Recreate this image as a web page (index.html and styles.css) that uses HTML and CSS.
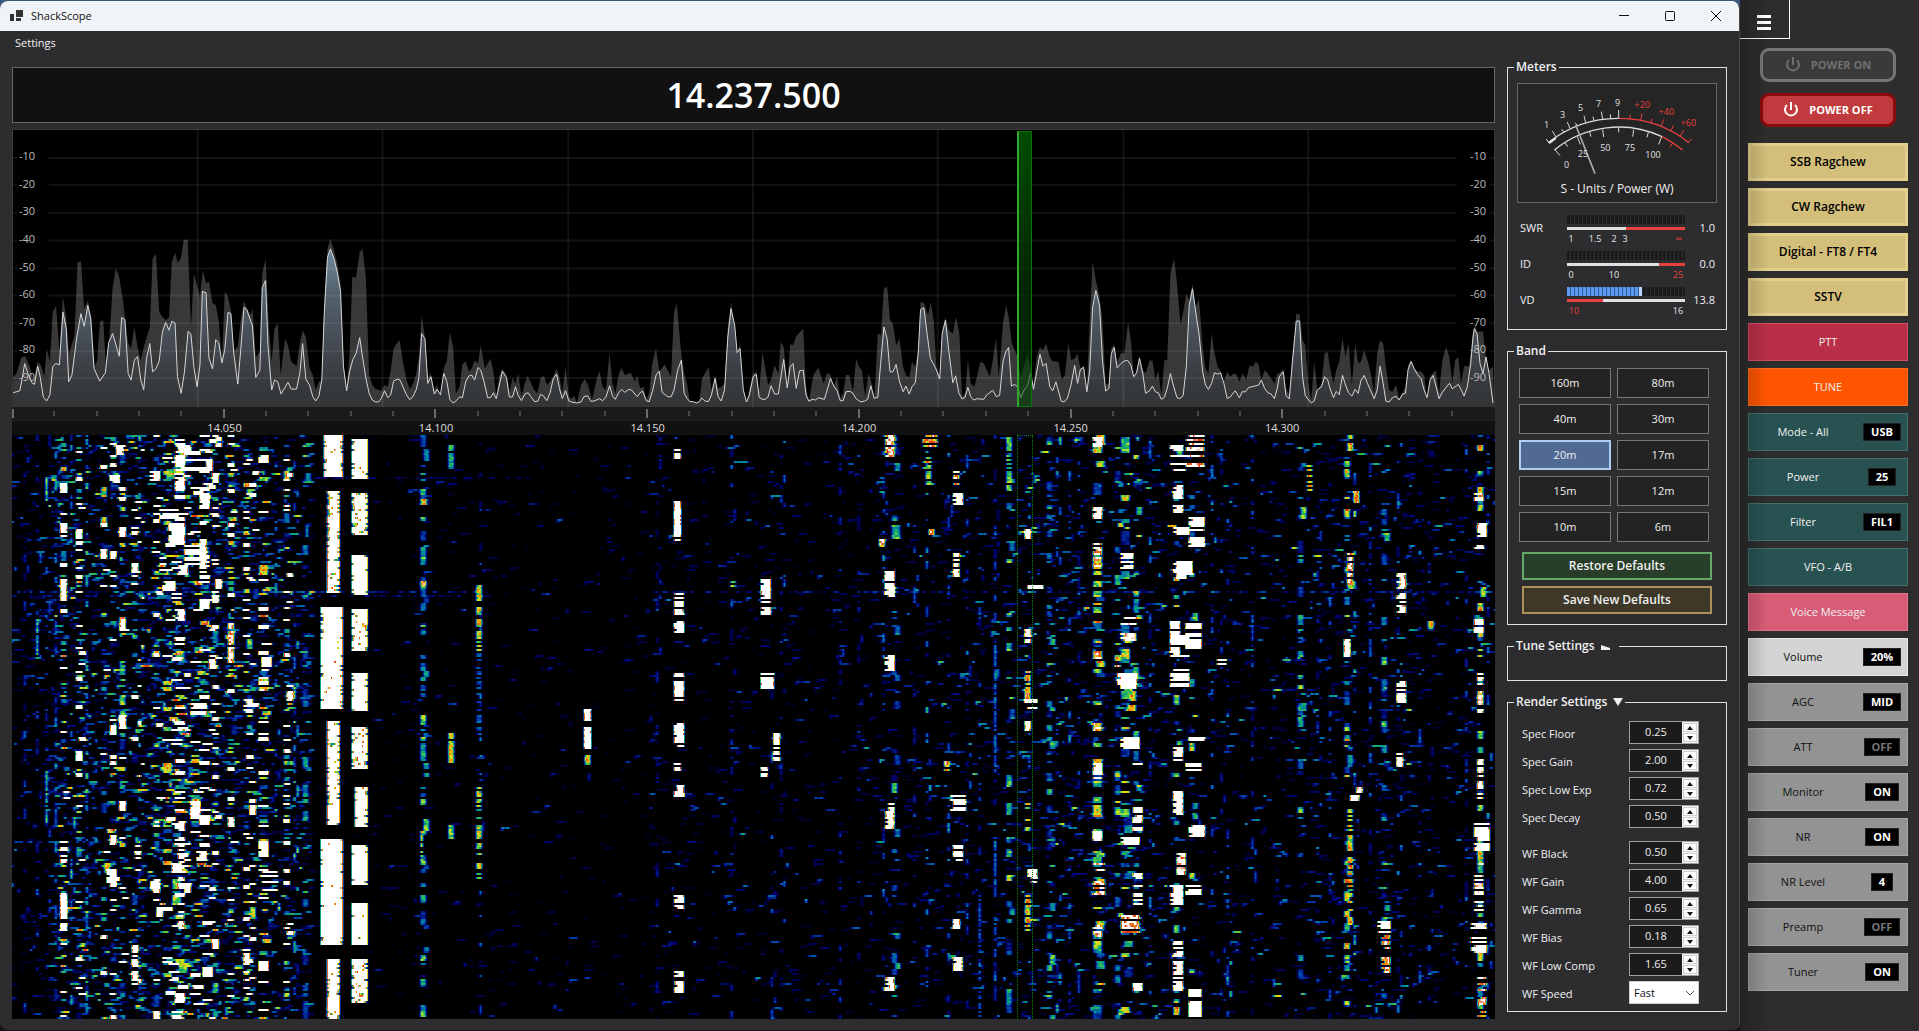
FILE: index.html
```html
<!DOCTYPE html>
<html lang="en">
<head>
<meta charset="utf-8">
<title>ShackScope</title>
<link rel="stylesheet" href="styles.css">
</head>
<body>
<div class="desktop">
  <div class="window">
    <header class="titlebar">
      <svg class="app-icon" width="13" height="12" viewBox="0 0 13 12" fill="#333"><path d="M0 4h4v7H0zM6 0h7v7H6zM6 8h5v3H6z"/></svg>
      <span class="app-name">ShackScope</span>
      <div class="caption-buttons">
        <button class="caption" aria-label="Minimize"><svg width="12" height="12" viewBox="0 0 12 12" stroke="#111" fill="none"><path d="M1 5.500h10"/></svg></button>
        <button class="caption" aria-label="Maximize"><svg width="12" height="12" viewBox="0 0 12 12" stroke="#111" fill="none"><rect x="1.500" y="1.500" width="9" height="9" rx="1"/></svg></button>
        <button class="caption" aria-label="Close"><svg width="12" height="12" viewBox="0 0 12 12" stroke="#111" fill="none"><path d="M1 1l10 10M11 1L1 11"/></svg></button>
      </div>
    </header>
    <nav class="menubar"><button class="menu-item">Settings</button></nav>
    <div class="workspace">
      <main class="scope">
        <output class="frequency">14.237.500</output>
        <section class="spectrum" aria-label="Spectrum">
          <svg class="plot" viewBox="0 0 1483 278" preserveAspectRatio="none">
            <defs>
              <linearGradient id="trace-fill" gradientUnits="userSpaceOnUse" x1="0" y1="115" x2="0" y2="278">
                <stop offset="0" stop-color="#7590a5"/><stop offset="0.300" stop-color="#53616c"/><stop offset="0.600" stop-color="#454b54"/><stop offset="0.800" stop-color="#3a3d40"/><stop offset="1" stop-color="#323436"/>
              </linearGradient>
            </defs>
            <polygon id="peaks" fill="#383838"/>
            <polygon id="trace-area" fill="url(#trace-fill)"/>
            <path class="grid" d="M185 0V278M370 0V278M556 0V278M741 0V278M926 0V278M1112 0V278M1297 0V278"/>
            <path class="grid" d="M36 28H1446M36 55H1446M36 83H1446M36 111H1446M36 139H1446M36 166H1446M36 194H1446M36 222H1446M36 249H1446"/>
            <path class="grid" d="M0 28h4M0 55h4M0 83h4M0 111h4M0 139h4M0 166h4M0 194h4M0 222h4M0 249h4M1478 28h5M1478 55h5M1478 83h5M1478 111h5M1478 139h5M1478 166h5M1478 194h5M1478 222h5M1478 249h5"/>
            <polyline id="trace" fill="none" stroke="#d6d6d6" vector-effect="non-scaling-stroke"/>
          </svg>
          <div class="db-scale db-left"><span>-10</span><span>-20</span><span>-30</span><span>-40</span><span>-50</span><span>-60</span><span>-70</span><span>-80</span><span>-90</span></div>
          <div class="db-scale db-right"><span>-10</span><span>-20</span><span>-30</span><span>-40</span><span>-50</span><span>-60</span><span>-70</span><span>-80</span><span>-90</span></div>
          <div class="passband"></div>
        </section>
        <div class="ruler">
          <svg class="ticks" viewBox="0 0 1483 13" preserveAspectRatio="none">
            <path stroke="#777" d="M42 4v5M85 4v5M127 4v5M169 4v5M254 4v5M296 4v5M339 4v5M381 4v5M466 4v5M508 4v5M550 4v5M593 4v5M677 4v5M720 4v5M762 4v5M804 4v5M889 4v5M931 4v5M974 4v5M1016 4v5M1101 4v5M1143 4v5M1186 4v5M1228 4v5M1313 4v5M1355 4v5M1397 4v5M1440 4v5"/>
            <path stroke="#bbb" d="M1 2v9M212 2v9M423 2v9M635 2v9M847 2v9M1059 2v9M1270 2v9"/>
          </svg>
          <div class="ruler-labels"><span>14.050</span><span>14.100</span><span>14.150</span><span>14.200</span><span>14.250</span><span>14.300</span></div>
        </div>
        <div class="waterfall">
          <canvas id="waterfall" width="1483" height="584"></canvas>
          <div class="passband-track"></div>
        </div>
      </main>

      <aside class="panels">
        <fieldset>
          <legend>Meters</legend>
          <div class="meters">
            <figure class="dial">
              <svg viewBox="84 252 594 270" fill="none" stroke-width="4">
                <path stroke="#d8d8d8" d="M175 428A334 334 0 0 1 386 355"/>
                <path stroke="#e8403c" d="M386 355A334 334 0 0 1 597 428"/>
                <path stroke="#e4e4e4" stroke-width="7" d="M177 429L197 414"/>
                <path stroke="#d8d8d8" d="M193 450A306 306 0 0 1 516 410"/>
                <path stroke="#e8403c" d="M516 410Q550 427 578 450"/>
                <path stroke="#d8d8d8" stroke-width="3" d="M176 428L169 417M198 411L187 393M222 398L215 387M240 386L232 366M262 378L256 368M287 370L282 347M312 362L309 350M338 358L334 335M362 356L361 343M386 356V330"/>
                <path stroke="#e8403c" stroke-width="3" d="M419 358L421 344M452 362L456 340M482 369L487 356M513 380L521 358M543 393L550 377M570 409L582 390M594 428L605 416M547 430L540 441"/>
                <path stroke="#d8d8d8" stroke-width="3" d="M194 448L210 467M226 429L233 440M262 410L271 433M299 396L303 410M338 388L341 411M386 384V397M431 389L428 410M475 397L471 412M515 410L506 433"/>
                <path stroke="#a9a9a9" stroke-width="5" d="M257 375L315 521"/>
                <g class="dial-text">
                  <text x="170" y="383">1</text><text x="218" y="353">3</text><text x="272" y="332">5</text><text x="326" y="320">7</text><text x="383" y="317">9</text>
                  <text class="hot" x="457" y="323">+20</text><text class="hot" x="529" y="344">+40</text><text class="hot" x="595" y="378">+60</text>
                  <text x="230" y="503">0</text><text x="279" y="470">25</text><text x="346" y="452">50</text><text x="420" y="452">75</text><text x="489" y="473">100</text>
                </g>
              </svg>
              <figcaption>S - Units / Power (W)</figcaption>
            </figure>
            <div class="meter-row">
              <span class="meter-name">SWR</span>
              <svg class="meter-bar" viewBox="0 0 118 33">
                <defs><pattern id="cells" width="4" height="9" patternUnits="userSpaceOnUse"><rect width="3" height="9" fill="#1b1b1b"/></pattern>
                <pattern id="lit" width="4" height="9" patternUnits="userSpaceOnUse"><rect width="4" height="9" fill="#36578a"/><rect width="3" height="9" fill="#5b9bf5"/></pattern></defs>
                <rect width="118" height="9" fill="url(#cells)"/><rect y="12" width="59" height="3" fill="#e0e0e0"/><rect x="59" y="12" width="59" height="3" fill="#e8403c"/>
                <text x="4" y="27">1</text><text x="28" y="27">1.5</text><text x="47" y="27">2</text><text x="58" y="27">3</text><text class="hot" x="112" y="27">∞</text>
              </svg>
              <span class="meter-value">1.0</span>
            </div>
            <div class="meter-row">
              <span class="meter-name">ID</span>
              <svg class="meter-bar" viewBox="0 0 118 33">
                <rect width="118" height="9" fill="url(#cells)"/><rect y="12" width="92" height="3" fill="#e0e0e0"/><rect x="92" y="12" width="26" height="3" fill="#e8403c"/>
                <text x="4" y="27">0</text><text x="47" y="27">10</text><text class="hot" x="111" y="27">25</text>
              </svg>
              <span class="meter-value">0.0</span>
            </div>
            <div class="meter-row">
              <span class="meter-name">VD</span>
              <svg class="meter-bar" viewBox="0 0 118 33">
                <rect width="118" height="9" fill="url(#cells)"/><rect width="72" height="9" fill="url(#lit)"/><rect x="72" width="3" height="9" fill="#b4d6fb"/><rect y="12" width="36" height="3" fill="#e8403c"/><rect x="36" y="12" width="82" height="3" fill="#e0e0e0"/>
                <text class="hot" x="7" y="27">10</text><text x="111" y="27">16</text>
              </svg>
              <span class="meter-value">13.8</span>
            </div>
          </div>
        </fieldset>

        <fieldset>
          <legend>Band</legend>
          <div class="bands">
            <div class="band-grid">
              <button>160m</button><button>80m</button><button>40m</button><button>30m</button><button class="selected">20m</button><button>17m</button><button>15m</button><button>12m</button><button>10m</button><button>6m</button>
            </div>
            <button class="defaults restore">Restore Defaults</button>
            <button class="defaults save">Save New Defaults</button>
          </div>
        </fieldset>

        <fieldset>
          <legend><button class="fold">Tune Settings <svg width="16" height="16" viewBox="0 0 16 16" fill="#eee"><path d="M0 7l9 3v2H0z"/></svg></button></legend>
          <div class="tune"></div>
        </fieldset>

        <fieldset>
          <legend><button class="fold">Render Settings <svg width="10" height="16" viewBox="0 0 10 16" fill="#eee"><path d="M0 4h10L5 12z"/></svg></button></legend>
          <div class="render">
            <div class="setting"><label for="s1">Spec Floor</label><span class="spin"><input id="s1" type="number" step="0.01" value="0.25"><span class="arrows"><button class="up" aria-label="Increase"></button><button class="down" aria-label="Decrease"></button></span></span></div>
            <div class="setting"><label for="s2">Spec Gain</label><span class="spin"><input id="s2" type="number" step="0.01" value="2.00"><span class="arrows"><button class="up" aria-label="Increase"></button><button class="down" aria-label="Decrease"></button></span></span></div>
            <div class="setting"><label for="s3">Spec Low Exp</label><span class="spin"><input id="s3" type="number" step="0.01" value="0.72"><span class="arrows"><button class="up" aria-label="Increase"></button><button class="down" aria-label="Decrease"></button></span></span></div>
            <div class="setting group-end"><label for="s4">Spec Decay</label><span class="spin"><input id="s4" type="number" step="0.01" value="0.50"><span class="arrows"><button class="up" aria-label="Increase"></button><button class="down" aria-label="Decrease"></button></span></span></div>
            <div class="setting"><label for="s5">WF Black</label><span class="spin"><input id="s5" type="number" step="0.01" value="0.50"><span class="arrows"><button class="up" aria-label="Increase"></button><button class="down" aria-label="Decrease"></button></span></span></div>
            <div class="setting"><label for="s6">WF Gain</label><span class="spin"><input id="s6" type="number" step="0.01" value="4.00"><span class="arrows"><button class="up" aria-label="Increase"></button><button class="down" aria-label="Decrease"></button></span></span></div>
            <div class="setting"><label for="s7">WF Gamma</label><span class="spin"><input id="s7" type="number" step="0.01" value="0.65"><span class="arrows"><button class="up" aria-label="Increase"></button><button class="down" aria-label="Decrease"></button></span></span></div>
            <div class="setting"><label for="s8">WF Bias</label><span class="spin"><input id="s8" type="number" step="0.01" value="0.18"><span class="arrows"><button class="up" aria-label="Increase"></button><button class="down" aria-label="Decrease"></button></span></span></div>
            <div class="setting"><label for="s9">WF Low Comp</label><span class="spin"><input id="s9" type="number" step="0.01" value="1.65"><span class="arrows"><button class="up" aria-label="Increase"></button><button class="down" aria-label="Decrease"></button></span></span></div>
            <div class="setting"><label for="s10">WF Speed</label><span class="speed"><select id="s10"><option>Fast</option><option>Slow</option></select><svg width="10" height="6" viewBox="0 0 10 6" fill="none" stroke="#555"><path d="M1 1l4 4 4-4"/></svg></span></div>
          </div>
        </fieldset>
      </aside>
    </div>
  </div>

  <nav class="rig">
    <button class="hamburger" aria-label="Menu"><span></span><span></span><span></span></button>
    <div class="power">
      <button class="power-on" disabled><svg width="16" height="16" viewBox="0 0 16 16" fill="none" stroke="currentColor" stroke-width="2"><path d="M8 0v8M4 3a6 6 0 1 0 8 0"/></svg>POWER ON</button>
      <button class="power-off"><svg width="16" height="16" viewBox="0 0 16 16" fill="none" stroke="currentColor" stroke-width="2"><path d="M8 0v8M4 3a6 6 0 1 0 8 0"/></svg>POWER OFF</button>
    </div>
    <div class="rig-buttons">
      <button class="preset">SSB Ragchew</button>
      <button class="preset">CW Ragchew</button>
      <button class="preset">Digital - FT8 / FT4</button>
      <button class="preset">SSTV</button>
      <button class="ptt">PTT</button>
      <button class="tune-btn">TUNE</button>
      <button class="teal split"><span>Mode - All</span><span><b>USB</b></span></button>
      <button class="teal split"><span>Power</span><span><b>25</b></span></button>
      <button class="teal split"><span>Filter</span><span><b>FIL1</b></span></button>
      <button class="teal">VFO - A/B</button>
      <button class="voice">Voice Message</button>
      <button class="light split"><span>Volume</span><span><b>20%</b></span></button>
      <button class="gray split"><span>AGC</span><span><b>MID</b></span></button>
      <button class="gray split"><span>ATT</span><span><b class="off">OFF</b></span></button>
      <button class="gray split"><span>Monitor</span><span><b>ON</b></span></button>
      <button class="gray split"><span>NR</span><span><b>ON</b></span></button>
      <button class="gray split"><span>NR Level</span><span><b>4</b></span></button>
      <button class="gray split"><span>Preamp</span><span><b class="off">OFF</b></span></button>
      <button class="gray split"><span>Tuner</span><span><b>ON</b></span></button>
    </div>
  </nav>
</div>
<script src="scope.js"></script>
</body>
</html>
```
FILE: styles.css
```css
* { box-sizing: border-box; }
body { margin: 0; background: #2d2d2d; color: #f0f0f0; font: 11px/16px "Open Sans", "Noto Sans", sans-serif; }
button, input, select { font: inherit; color: inherit; margin: 0; padding: 0; border: 0; background: none; border-radius: 0; }
fieldset { margin: 0; padding: 0; border: 1px solid #e0e0e0; min-width: 0; }
svg { display: block; }

.desktop { display: grid; grid-template-columns: minmax(0, 1fr) 179px; min-height: 100vh; background: linear-gradient(#35597f 0, #35597f 10px, #151517 10px); }
.window { display: flex; flex-direction: column; margin: 1px 0; background: #2d2d30; border-right: 1px solid #484848; border-radius: 8px; overflow: hidden; }

.titlebar { display: flex; align-items: center; height: 30px; padding-left: 10px; background: #f0f3f8; color: #111; }
.app-name { margin-left: 8px; }
.caption-buttons { display: flex; margin-left: auto; }
.caption { display: grid; place-items: center; width: 46px; height: 30px; }
.menubar { height: 28px; padding: 4px 15px; }
.menu-item { display: block; }

.workspace { flex: 1; display: grid; grid-template-columns: minmax(0, 1fr) 220px; gap: 12px; padding: 0 12px 11px; }
.scope { display: flex; flex-direction: column; padding-top: 8px; }
.frequency { display: grid; place-items: center; height: 56px; margin-bottom: 6px; background: #111; border: 1px solid #666; color: #fff; font-size: 34px; font-weight: 600; line-height: 40px; }

.spectrum { position: relative; height: 278px; background: #000; border: solid #3a3a3a; border-width: 1px 1px 0; }
.plot { width: 100%; height: 277px; }
.grid { stroke: #fff; stroke-opacity: 0.070; stroke-width: 2; fill: none; }
.db-scale { position: absolute; top: 18px; display: flex; flex-direction: column; justify-content: space-between; height: 237px; color: #bbb; line-height: 16px; }
.db-left { left: 6px; }
.db-right { right: 8px; }
.passband { position: absolute; top: 1px; bottom: 0; left: 67.800%; width: 15px; border: 1px solid #087508; border-left: 2px solid #30a830; background: linear-gradient(rgba(0, 80, 0, 0.950), rgba(0, 50, 0, 0.700) 60%, rgba(0, 70, 0, 0.500)); }

.ruler { height: 28px; background: #111; }
.ticks { width: 100%; height: 14px; background: #1a1a1a; border-bottom: 1px solid #222; }
.ruler-labels { display: flex; padding-left: 7.200%; color: #ddd; line-height: 14px; }
.ruler-labels span { flex: 0 0 15.370%; text-align: center; }
.waterfall { position: relative; flex: 1; min-height: 400px; background: #000; }
.waterfall canvas { position: absolute; inset: 0; width: 100%; height: 100%; }
.passband-track { position: absolute; top: 0; bottom: 0; left: 67.800%; width: 16px; border: 1px dotted #0a8a0a; border-bottom: 0; }

.panels { display: flex; flex-direction: column; gap: 13px; }
legend { margin-left: 6px; padding: 0 2px; font-weight: 600; font-size: 12px; line-height: 16px; }
.fold { display: flex; gap: 6px; }

.meters { padding: 8px 9px 5px; }
.dial { margin: 0 0 12px; height: 120px; padding: 0; border: 1px solid #666; background: #252525; }
.dial svg { width: 198px; height: 90px; }
.dial figcaption { padding-top: 7px; text-align: center; font-size: 12px; }
.dial-text { fill: #e0e0e0; stroke: none; font-size: 27px; text-anchor: middle; }
.dial-text .hot, .meter-bar .hot { fill: #e8403c; }
.meter-row { display: grid; grid-template-columns: 47px 118px 1fr; height: 36px; padding: 0 2px 0 3px; }
.meter-row:last-child { height: 37px; }
.meter-bar { width: 118px; height: 33px; }
.meter-bar text { fill: #e8e8e8; font-size: 9px; text-anchor: middle; }
.meter-name, .meter-value { padding-top: 5px; }
.meter-value { text-align: right; }

.bands { display: flex; flex-direction: column; gap: 6px; padding: 9px 14px 10px 11px; }
.band-grid { display: grid; grid-template-columns: 92px 92px; gap: 6px; margin-bottom: 4px; }
.band-grid button { height: 30px; background: #232323; border: 1px solid #777; }
.band-grid .selected { background: #506a94; border: 2px solid #b0cdf0; }
.defaults { width: 190px; height: 28px; margin-left: 3px; font-size: 12px; font-weight: 600; }
.restore { background: #283e28; border: 2px solid #66a86a; }
.save { background: #3e3828; border: 2px solid #a89058; }
.tune { height: 26px; }

.render { display: flex; flex-direction: column; gap: 5px; padding: 11px 27px 7px 14px; }
.setting { display: flex; justify-content: space-between; height: 23px; }
.setting label { padding-top: 5px; }
.group-end { margin-bottom: 8px; }
.spin { display: flex; width: 70px; height: 23px; background: #1b1b1b; border: 1px solid #a0a0a0; }
.spin input { width: 52px; height: 18px; text-align: center; appearance: textfield; -moz-appearance: textfield; }
.spin input::-webkit-inner-spin-button { appearance: none; margin: 0; }
.arrows { display: flex; flex-direction: column; gap: 1px; width: 16px; padding: 1px; background: #f4f4f4; }
.arrows button { display: grid; place-items: center; flex: 1; background: #fdfdfd; border: 1px solid #d0d0d0; }
.arrows button::before { content: ""; border: 3px solid transparent; }
.arrows .up::before { border-top: 0; border-bottom: 4px solid #111; }
.arrows .down::before { border-bottom: 0; border-top: 4px solid #111; }
.speed { position: relative; }
.speed select { display: block; width: 70px; height: 23px; padding-left: 4px; appearance: none; background: #fff; border: 1px solid #ccc; color: #111; }
.speed svg { position: absolute; right: 4px; top: 9px; pointer-events: none; }

.rig { position: relative; background: #2d2d2d; padding-bottom: 30px; }
.rig::after { content: ""; position: absolute; top: 0; bottom: 0; left: 0; width: 28px; background: linear-gradient(90deg, rgba(0, 0, 0, 0.220), rgba(0, 0, 0, 0)); pointer-events: none; }
.hamburger { display: flex; flex-direction: column; justify-content: center; align-items: center; gap: 3px; width: 50px; height: 39px; padding: 6px 2px 0 0; border: solid #fff; border-width: 0 1px 1px 0; }
.hamburger span { width: 14px; height: 3px; background: #fff; }
.power { display: flex; flex-direction: column; gap: 11px; width: 136px; margin: 9px 0 16px 20px; font-weight: 600; }
.power button { display: flex; align-items: center; justify-content: center; gap: 10px; height: 34px; border: 3px solid #757575; border-radius: 9px; }
.power .power-on { background: #3a3a3a; color: #707070; }
.power .power-off { background: #c13b3e; border-color: #8b0a0c; color: #fff; font-weight: 700; }
.power .power-on { font-weight: 700; }
.rig-buttons { display: flex; flex-direction: column; gap: 7px; width: 160px; margin-left: 8px; }
.rig-buttons button { height: 38px; border: 1px solid; }
.rig-buttons .preset { background: #d3be7a; border: 3px solid #e2cf8b; color: #000; font-size: 12px; font-weight: 600; }
.rig-buttons .ptt { background: #b92f49; border-color: #d64c64; }
.rig-buttons .tune-btn { background: #ff5500; border-color: #ff6c20; }
.rig-buttons .teal { background: #285252; border-color: #437271; }
.rig-buttons .voice { background: #d85c76; border-color: #e8748c; }
.rig-buttons .light { background: #d4d4d4; border-color: #e8e8e8; color: #111; }
.rig-buttons .gray { background: #939393; border-color: #a6a6a6; color: #111; }
.split { display: grid; grid-template-columns: 1fr 50px; align-items: center; }
.split b { display: inline-block; padding: 0 7px; background: #000; border: 1px solid #222; color: #fff; font-weight: 700; line-height: 16px; }
.split .off { color: #777; }
```
FILE: scope.js
```js
// Traces are stored in three capture blocks, each with its own origin and horizontal scale.
const blocks = [
  { x0: -12, k: 2.45,
    trace: "30,1178 46,1172 52,1135 58,1090 66,1120 76,1148 82,1153 90,1098 96,1130 104,1192 112,1203 120,1184 127,1100 134,1090 143,1094 152,935 160,985 166,1145 174,1125 186,1010 196,940 204,978 213,915 220,955 228,1105 242,1143 256,1118 264,1027 274,1000 290,1068 296,952 304,958 312,1120 319,1140 327,1080 335,1069 343,1140 350,1170 357,1075 365,1030 372,1115 380,1106 388,1083 396,995 404,966 412,990 419,963 427,968 433,1130 442,1180 450,1115 459,993 466,1002 473,1100 481,1160 488,1095 494,873 503,877 510,1073 519,1106 527,1018 534,1027 542,1088 549,1048 557,936 564,940 571,1060 581,1152 588,1050 596,921 603,928 617,977 625,1132 635,1110 641,862 649,840 655,1035 664,1170 671,1140 679,1145 687,1182 704,1147 712,1167 725,1167 733,1120 740,1030 748,1138 757,1155 765,1190 772,1203 780,1187 787,1140 793,940 801,770 808,745 817,775 825,815 833,872 840,1100 848,1172 855,1115 863,1078 871,1060 880,1012 887,1070 895,1133 903,1180 911,1200 919,1206 927,1205 933,1195 941,1172 949,1193 956,1185 963,1143 972,1137 979,1140 987,1163 995,1185 1003,1199 1011,1188 1019,1168 1025,1133 1032,1000 1040,1015 1047,1150 1055,1130 1063,1182 1070,1168 1078,1184 1086,1120 1094,1145 1101,1198 1109,1209 1117,1202 1125,1190 1132,1193 1140,1145 1148,1127 1155,1125 1162,1140 1170,1102 1177,1110 1185,1145 1194,1193 1201,1193 1208,1178 1215,1196 1230,1114 1240,1132 1247,1191 1255,1191 1262,1160 1269,1187 1277,1202 1285,1182 1293,1178 1301,1192 1309,1205 1317,1203 1324,1183 1331,1188 1339,1202 1347,1178 1355,1135 1363,1122 1370,1165 1377,1196 1385,1172 1393,1203 1400,1206 1413,1209 1423,1206 1430,1190 1439,1187 1447,1204 1455,1203 1468,1196 1476,1202 1484,1192 1493,1157 1500,1187 1507,1198 1515,1178 1523,1168 1530,1177 1540,1168 1547,1170 1561,1190",
    peak: "30,1130 38,1120 50,1072 60,1068 70,1098 80,1140 90,1085 98,1095 106,1130 112,1045 120,1085 127,935 135,917 143,1050 152,890 160,950 167,1060 180,1005 188,785 196,783 204,925 213,900 222,950 230,1100 236,1080 243,963 251,960 257,1090 266,1010 274,860 282,803 290,830 298,890 304,950 312,1030 319,1045 327,980 335,1040 343,1080 350,1040 365,980 372,775 380,760 388,935 396,950 404,960 412,952 419,785 427,757 434,787 441,775 448,718 458,717 466,980 473,820 481,855 488,890 495,810 503,848 510,843 519,908 527,915 534,960 542,1080 549,873 557,890 564,930 571,1050 581,1040 588,960 596,902 604,925 612,945 617,925 625,1070 635,1055 641,820 649,775 657,980 664,1085 671,985 679,970 686,1125 697,1015 704,1035 712,1085 725,1098 733,1030 740,990 748,1010 757,1105 765,1125 772,1170 780,1145 787,1140 793,900 801,745 808,715 817,750 825,790 833,850 840,1090 848,1165 855,1060 862,828 871,832 880,755 887,745 895,830 903,1125 911,1155 919,1167 933,1172 941,1155 949,1160 956,1110 963,1045 972,1028 978,1020 986,1085 995,1140 1003,1168 1011,1150 1019,1120 1026,1060 1032,948 1040,1010 1047,1135 1054,1118 1062,1170 1070,1155 1078,1196 1086,1105 1094,1080 1101,997 1109,1040 1116,1180 1125,1160 1132,1092 1140,1083 1148,1115 1155,1105 1162,1080 1170,1090 1177,1035 1187,1105 1201,1075 1208,1115 1215,1190 1222,1130 1230,1105 1240,1125 1248,1175 1255,1133 1262,1150 1269,1120 1277,1190 1285,1150 1292,1127 1308,1170 1316,1180 1324,1133 1332,1128 1340,1155 1355,1130 1363,1105 1370,1130 1377,1180 1385,1103 1393,1190 1400,1196 1406,1187 1413,1209 1423,1155 1432,1137 1440,1155 1450,1200 1460,1145 1468,1112 1476,1160 1484,1170 1493,1060 1500,1150 1507,1180 1515,1125 1522,1103 1530,1125 1545,1118 1555,1145 1561,1127" },
  { x0: 628, k: 2.45,
    trace: "0,1178 6,1173 15,1202 22,1205 30,1175 39,1125 47,1113 54,1177 68,1190 76,1190 83,1170 92,1110 101,1080 108,1180 115,1195 122,1205 130,1205 139,1209 145,1205 151,1194 160,1204 168,1204 175,1185 184,1135 191,1190 199,1203 207,1170 215,1010 223,925 232,975 238,1057 245,1045 253,1170 261,1206 268,1185 277,1130 285,1122 292,1192 300,1198 307,1198 314,1190 321,1157 330,1182 339,1182 346,1125 352,1078 361,1163 368,1100 375,1090 383,1165 391,1112 400,1110 407,1185 414,1204 422,1198 430,1200 437,1193 452,1198 459,1170 467,1135 475,1158 483,1172 491,1202 498,1202 505,1175 515,1174 522,1180 530,1196 540,1205 550,1204 558,1198 566,1157 574,1195 583,1192 590,1090 598,980 606,1015 613,1115 620,1115 628,1093 636,1143 645,1175 652,1158 660,1182 667,1160 675,1148 682,1060 688,928 696,922 704,1000 712,1075 720,1092 727,1110 735,1137 741,1000 749,960 757,1050 767,1148 774,1127 782,1180 790,1197 797,1192 804,1162 811,1190 818,1200 827,1196 835,1197 843,1198 850,1185 865,1171 874,1190 882,1186 890,1085 897,1055 904,1042 911,1158 918,1153 926,1160 934,1193 942,1170 950,1158 958,1120 965,1168 973,1115 981,1062 988,1098 996,1090 1005,1160 1012,1172 1020,1145 1033,1203 1040,1206 1048,1195 1057,1155 1066,1096 1073,1150 1080,1108 1088,1102 1096,1175 1103,1110 1110,920 1118,870 1127,915 1134,1080 1142,1173 1150,1165 1156,1060 1163,1042 1170,1103 1180,1090 1188,1082 1196,1081 1204,1095 1211,1130 1218,1118 1225,1075 1233,1120 1240,1180 1249,1173 1257,1158 1264,1175 1271,1178 1279,1198 1286,1192 1293,1165 1301,1120 1309,1160 1317,1193 1324,1196 1332,1187 1340,1100 1347,915 1355,865 1363,935 1371,1000 1380,1115 1387,1155 1394,1168 1402,1150 1409,1118 1417,1122 1424,1118 1432,1150 1440,1195 1447,1192 1460,1172 1470,1193 1477,1175 1485,1175 1493,1162 1501,1160 1517,1155 1524,1140 1532,1165 1540,1178 1548,1182 1556,1196 1563,1165",
    peak: "0,1165 8,1160 15,1198 22,1180 30,1090 39,1045 47,1115 60,1092 76,1130 83,935 90,910 100,1050 108,1120 115,1150 122,1205 145,1205 152,1135 168,1100 175,1170 184,1125 191,1165 199,1160 207,1150 215,980 223,905 232,990 238,1060 245,1030 253,1170 261,1206 270,1155 277,1120 285,1115 292,1175 300,1055 314,1155 321,1140 330,1095 339,1120 345,1025 352,1040 361,1155 368,1032 375,1035 383,1008 400,985 407,1165 414,1204 425,1125 437,1103 450,1150 459,1118 467,1125 475,1160 483,1130 491,1195 498,1180 505,1125 513,1125 522,1175 530,1075 536,1098 544,1110 552,1190 560,1120 566,1140 575,1190 583,1000 591,1005 598,865 606,858 613,960 620,970 628,1035 636,1015 645,1100 652,1125 660,1133 667,1085 675,1100 682,1050 688,905 696,908 706,945 713,905 720,960 727,1100 735,1130 741,1000 749,950 757,990 767,1000 775,950 783,1000 790,1190 797,1180 804,1078 811,1150 820,1160 835,1085 843,1090 858,1130 865,1080 873,1015 880,1130 890,970 898,915 904,950 912,1030 926,1070 934,1130 950,1063 958,1100 965,1155 973,1070 981,1040 988,1050 996,1030 1005,1070 1012,1083 1026,1085 1035,1140 1042,1125 1050,1030 1058,1080 1066,1075 1073,1060 1080,1105 1088,1095 1096,1165 1103,960 1110,783 1118,840 1127,890 1134,960 1142,1155 1150,1150 1156,1045 1163,1032 1170,1085 1180,1058 1188,1060 1197,965 1204,1020 1211,1130 1218,1110 1225,1065 1233,1110 1240,1120 1250,1080 1257,1082 1264,1140 1271,1112 1279,1185 1286,1080 1293,1080 1301,820 1310,775 1317,850 1326,975 1333,930 1340,880 1347,900 1355,850 1363,920 1371,895 1380,1040 1387,1105 1394,1120 1402,1000 1409,1060 1417,1100 1425,1115 1432,1145 1440,1115 1448,1130 1455,1120 1463,1123 1470,1145 1478,1120 1487,1140 1495,1095 1503,1100 1510,1085 1517,1092 1524,1140 1532,1110 1540,1120 1548,1135 1556,1150 1563,1120" },
  { x0: 1168, k: 3,
    trace: "300,1130 312,1115 320,1187 330,1196 340,1080 351,962 361,962 370,1130 378,1187 396,1209 405,1203 414,1170 427,1160 436,1130 445,1138 454,1170 463,1193 471,1174 480,1184 490,1126 499,1155 508,1178 518,1188 528,1168 537,1180 545,1142 555,1126 565,1150 585,1196 594,1170 603,1098 612,1150 620,1203 630,1206 640,1193 651,1189 660,1200 670,1183 679,1180 687,1108 696,1084 705,1105 715,1123 726,1136 735,1170 744,1193 753,1140 762,1126 771,1160 780,1196 789,1178 800,1163 811,1150 820,1166 828,1160 838,1153 846,1168 855,1188 865,1160 875,1090 882,1010 886,985 894,1000 903,1090 912,1120 921,1070 930,1120 942,1209",
    peak: "300,1120 312,1105 320,1165 330,1185 340,1060 351,940 361,942 370,1020 378,1035 387,1150 396,1200 405,1085 414,1170 427,1150 436,1060 445,1055 454,1110 463,1150 471,1110 480,1085 490,1015 499,1070 508,1030 518,1155 528,1030 537,1090 545,1085 555,1050 565,1080 575,1120 585,1180 594,1060 603,1020 612,1030 620,1100 630,1170 640,1175 651,1155 660,1196 670,1178 679,1160 687,1095 696,1080 705,1105 715,1113 726,1115 735,1125 744,1205 753,1130 762,1118 770,1110 780,1180 790,1080 801,1040 811,1070 820,1150 828,1080 838,1070 846,1150 855,1098 870,1098 880,1010 888,970 894,995 912,993 921,1080 930,1110 942,1100" }
];
const join = key => blocks.map(b => b[key].split(" ").map(p => {
  const [x, y] = p.split(",").map(Number);
  return (b.x0 + x / b.k).toFixed(1) + "," + (y / 3 - 129).toFixed(1);
}).join(" ")).join(" ");
const close = pts => "0,278 " + pts + " 1483,278";
document.getElementById("trace").setAttribute("points", join("trace"));
document.getElementById("trace-area").setAttribute("points", close(join("trace")));
document.getElementById("peaks").setAttribute("points", close(join("peak")));

// Waterfall: bins of signal level, one row per two pixels, run through a colour map.
const canvas = document.getElementById("waterfall");
const W = canvas.width, H = canvas.height, BIN = 3.1, ROW = 2;
const bins = Math.ceil(W / BIN) + 2, rows = H / ROW;
const level = new Float32Array(bins * rows);
let seed = 20250;
const rnd = () => { seed = (seed * 1664525 + 1013904223) >>> 0; return seed / 4294967296; };
const add = (b, r, v) => { if (b >= 0 && b < bins && r >= 0 && r < rows) level[r * bins + b] = Math.max(level[r * bins + b], v); };

// Background noise by region: start, end, chance of a speck, strength.
[[0, 40, 0.05, 0.36], [40, 130, 0.09, 0.55], [130, 225, 0.13, 0.6], [225, 300, 0.08, 0.5], [300, 640, 0.016, 0.28],
 [640, 860, 0.025, 0.34], [860, 1010, 0.04, 0.4], [1010, 1160, 0.06, 0.46], [1160, 1260, 0.035, 0.4], [1260, 1400, 0.05, 0.42], [1400, 1483, 0.04, 0.36]
].forEach(([a, z, p, s]) => {
  for (let r = 0; r < rows; r++) for (let b = Math.floor(a / BIN); b < z / BIN; b++)
    if (rnd() < p) {
      const v = s * (0.25 + rnd() * rnd() * 1.5), n = 1 + Math.floor(rnd() * 3);
      for (let i = 0; i < n; i++) add(b + i, r, v * (0.75 + rnd() * 0.35));
      if (rnd() < 0.3) add(b, r + 1, v * 0.8);
    }
});

// Persistent carriers: x, width in bins, chance of being keyed, strength.
[[13,1,.2,.4],[24,1,.15,.4],[34,1,.2,.4],[42,1,.25,.5],[51,2,.5,1.2],[59,1,.25,.55],[68,2,.46,1.05],[73,1,.3,.6],[90,2,.34,1],[100,2,.26,.95],[110,2,.26,1.05],
 [123,2,.36,.95],[127,1,.26,.9],[143,2,.28,.95],[155,3,.3,1.1],[163,3,.36,1.15],[168,3,.36,1.2],[175,2,.26,1],[182,3,.3,1.2],[191,3,.38,1.2],[199,2,.28,1],[204,2,.24,.95],[217,2,.34,1.05],
 [233,2,.42,1.1],[239,2,.32,.95],[251,3,.36,1.25],[264,1,.2,.5],[274,2,.42,.92],[281,1,.22,.6],[292,2,.22,.5],[410,2,.55,.56],[467,1,.2,.4],
 [644,1,.2,.3],[720,1,.25,.4],[758,1,.12,.4],[770,1,.25,.4],[827,1,.2,.35],[845,1,.15,.3],[870,1,.25,.45],[882,2,.26,.5],[901,1,.2,.4],[916,1,.25,.5],[935,1,.25,.5],
 [955,1,.2,.4],[966,1,.3,.4],[982,1,.4,.42],[998,2,.34,.58],[1016,1,.15,.5],[1037,2,.3,.55],[1045,1,.25,.55],[1058,1,.22,.45],[1066,1,.25,.45],[1085,3,.34,.7],[1104,2,.26,.6],[1113,3,.3,.64],[1124,2,.26,.66],[1139,1,.25,.5],
 [1164,2,.2,.7],[1178,2,.2,.6],[1200,1,.2,.5],[1209,1,.2,.4],[1216,1,.25,.55],[1240,1,.25,.4],[1289,2,.28,.55],[1306,1,.2,.4],[1317,1,.2,.4],[1336,2,.38,.7],[1343,1,.2,.6],[1358,1,.25,.45],[1371,2,.3,.55],[1387,1,.2,.5],[1407,1,.2,.45],[1418,1,.15,.4],[1455,1,.25,.4],[1467,2,.38,.75],[1476,1,.2,.55]
].forEach(([x, w, p, s]) => {
  const b0 = Math.round(x / BIN - (w - 1) / 2), strong = s >= 0.9;
  let on = false, left = 0, gain = 1, shift = 0;
  for (let r = 0; r < rows; r++) {
    if (left-- <= 0) {
      on = strong && on ? false : rnd() < (strong ? p * 1.3 : p);
      left = strong ? (on ? (rnd() < 0.06 ? 4 : rnd() < 0.3 ? 1 : 0) : Math.floor(rnd() * rnd() * 6)) : Math.floor(rnd() * rnd() * 6);
      gain = strong ? (rnd() < 0.42 ? 1.6 : 0.25 + rnd() * 0.5) : 0.45 + rnd() * 0.75;
      shift = rnd() < 0.2 ? 1 : 0;
    }
    if (on) for (let i = 0; i < w; i++) add(b0 + i + shift, r, s * gain * (0.75 + rnd() * 0.4));
  }
});

// Transmissions: x, width, top, bottom, solidity, strength.
const bursts = [
 [51,6,143,165,.9,1.5],[51,6,458,482,1,2],[51,6,488,496,1,2],[102,9,40,47,1,2],[143,9,35,46,1,2],[108,6,10,20,1,2],[101,6,116,123,.9,1.5],[157,20,73,84,.9,1.8],[163,14,88,109,1,2],[167,8,8,18,1,2],
 [166,8,20,55,.7,1.7],[183,30,24,40,.5,1.7],[191,9,58,73,1,2],[182,22,104,130,.45,1.6],[196,7,16,34,.6,1.6],[191,7,85,140,.5,1.7],[155,12,145,156,1,1.8],[152,7,121,138,.6,1.7],[203,7,155,168,.8,1.8],[186,14,264,280,.7,1.8],[172,10,130,142,.9,1.7],[168,7,175,185,1,2],
 [251,8,20,25,1,2],[251,8,233,250,.7,2],[251,9,405,422,.9,2],[255,14,434,456,.7,1.8],[100,9,434,448,1,2],[143,9,440,458,.6,1.8],[168,6,380,500,.5,1.5],[160,8,515,545,.5,1.6],[182,8,365,382,.9,2],[189,10,415,425,.9,2],
 [111,6,92,102,1,1.8],[111,6,182,200,.95,1.3],[218,6,185,228,.6,1.1],[90,6,82,89,1,.86],[90,6,52,62,1,.76],[121,6,510,550,.6,1.5],[126,7,410,435,.6,1.3],[241,7,472,484,1,.78],[234,8,260,280,.6,1.6],[233,6,515,545,.6,1.4],[111,6,280,294,.9,2],
 [24,4,184,223,.8,.62],[34,4,42,66,.95,.66],[42,4,41,46,1,.78],[34,4,336,387,.7,.6],[295,4,90,102,1,.6],[274,5,35,45,1,.72],[439,6,10,34,.9,.6],[439,6,297,327,.95,.78],[439,6,388,404,.9,.66],[467,6,149,215,.6,.75],[467,5,215,300,.3,.4],[467,6,345,447,.6,.72],[410,5,64,70,1,.85],[410,5,145,152,1,.9],[410,4,395,425,.7,.75],
 [575,7,273,285,1,2],[575,7,291,314,1,2],[575,5,320,330,.9,.82],[575,3,330,345,.6,.3],
 [665,7,14,23,.8,1.6],[665,7,65,105,.9,2],[666,8,157,180,.6,1.5],[665,8,185,198,1,2],[666,8,238,268,.7,1.7],[666,9,285,312,.85,2],[666,7,325,338,.5,2],[667,9,350,361,1,2],[667,8,459,474,.9,1.8],[665,9,535,557,.9,1.5],[720,5,145,162,.6,.7],
 [753,9,144,180,.72,1.7],[754,12,238,255,.8,2],[753,7,329,343,.7,2],[765,6,298,330,.6,1.5],[876,8,0,22,.85,1.1],[868,6,100,112,.8,1],[876,9,135,161,.95,1.9],[877,10,217,235,.8,1.7],[876,8,367,394,.8,1.3],[876,9,542,558,.8,1.2],[882,8,90,105,.7,.6],
 [918,14,0,12,.7,.9],[914,10,14,36,.6,.82],[917,6,36,48,.8,.7],[918,7,90,100,.6,1],[945,6,36,55,.6,1.2],[945,8,58,69,1,1.8],[945,7,118,141,.6,1.4],[944,14,359,375,.7,1.5],[935,7,325,335,.7,.9],[946,8,410,425,.6,1.8],[945,7,484,493,.9,1.8],[945,9,519,535,.8,1.5],
 [982,3,205,332,.7,.48],[982,3,400,460,.7,.5],[966,3,460,584,.5,.45],[998,6,20,60,.6,.62],[1016,6,94,103,1,1.3],[1022,16,150,156,.7,1.8],[1016,6,192,208,.8,1.6],[1016,6,235,265,.7,.9],[1019,12,260,276,.6,1.7],[1016,6,285,295,.9,1.2],[1016,6,367,408,.4,.75],[1020,8,433,447,.7,1.6],[1016,6,453,496,.5,.85],
 [1085,10,0,12,.8,1.5],[1086,9,72,83,.7,1.5],[1085,8,105,132,.6,1.2],[1085,9,215,228,.9,.95],[1085,9,279,297,.7,.95],[1085,9,328,343,.8,1.5],[1085,10,394,406,.9,1.6],[1085,12,427,462,.6,1.1],[1085,10,490,508,.7,1.2],
 [1113,12,118,135,.7,1.8],[1115,16,182,205,.55,1.3],[1104,7,222,232,.9,.9],[1115,20,238,254,.75,1.9],[1120,10,255,275,.7,.8],[1116,18,302,313,1,1.9],[1126,8,320,330,.6,1.6],[1126,9,372,395,.7,1.5],[1116,18,402,415,.6,1.6],[1126,9,436,470,.5,1.4],[1116,18,470,500,.5,1.1],[1127,10,545,556,.7,1.7],
 [1165,12,10,16,1,2],[1165,14,20,36,.65,1.5],[1165,9,50,67,.9,1.8],[1165,8,70,78,.8,1.8],[1167,14,90,100,.9,1.8],[1169,18,126,139,1,2],[1166,12,139,143,1,2],[1164,10,186,223,.8,1.8],[1168,18,200,221,.75,1.7],[1168,18,233,252,.75,1.8],[1165,9,312,326,.8,1.7],[1165,9,355,379,.85,1.8],[1168,10,418,439,.9,1.2],[1165,12,450,470,.85,1.8],[1166,10,505,555,.75,1.8],
 [1182,18,0,36,.5,1.2],[1182,14,73,96,.75,1.6],[1183,14,102,111,.9,1.8],[1180,14,188,215,.5,1.7],[1180,14,328,335,.9,1.9],[1182,14,388,402,.8,1.8],[1182,16,445,459,.6,1.7],[1182,12,552,582,.8,1.7],[1182,14,302,306,.8,1.8],[1210,10,224,230,.9,1.3],
 [1336,6,118,151,.65,1.1],[1336,7,203,221,.95,1.6],[1342,5,55,67,.9,.9],[1342,8,359,366,.8,1.5],[1336,6,380,490,.45,.8],[1348,7,345,360,.5,1.3],[1388,8,133,180,.75,1.3],[1387,8,246,270,.6,1.6],[1388,7,312,332,.7,1.5],[1371,12,486,500,.6,1.7],[1372,8,500,539,.55,1],[1419,6,185,193,1,.8],[1289,9,268,276,.7,.6],[1296,6,30,60,.4,.8],
 [1466,10,57,68,.8,1.6],[1469,9,88,102,.8,1.4],[1465,8,110,114,1,2],[1466,10,182,198,.85,1.7],[1469,6,235,280,.5,1.3],[1467,7,324,363,.5,1.3],[1468,14,388,418,.55,1.4],[1467,8,425,475,.55,1.3],[1467,14,484,517,.5,1.3],[1468,9,540,584,.4,1]
];
bursts.forEach(([x, w, y0, y1, d, s]) => {
  const b0 = Math.round((x - w / 2) / BIN + 0.5), n = Math.max(1, Math.round(w / BIN));
  for (let r = Math.round(y0 / ROW); r < y1 / ROW; r++) {
    if (rnd() > d) continue;
    const skip = n > 2 && rnd() < 0.25 ? 1 : 0;
    for (let i = skip; i < n; i++) add(b0 + i, r, s * (0.7 + rnd() * 0.45));
  }
});

// Digital-mode blocks: the band around them is kept quiet.
const digital = [
 [312,330,0,42,.99],[314,328,55,157,.9],[308,330,171,274,.97],[314,328,286,389,.9],[308,330,404,509,.97],[314,328,524,584,.95],
 [339,356,3,43,.99],[339,354,58,99,.82],[339,356,120,160,.99],[339,354,174,216,.92],[339,356,237,276,.99],[339,354,291,333,.84],[341,356,352,392,.99],[339,355,409,450,.99],[339,356,468,509,.99],[339,354,524,568,.9]
];
for (let r = 0; r < rows; r++) for (let b = Math.round(303 / BIN); b < 362 / BIN; b++) level[r * bins + b] *= 0.25;
digital.forEach(([x0, x1, y0, y1, d]) => {
  const a = Math.round(x0 / BIN + 0.5), z = Math.round(x1 / BIN + 0.5);
  for (let r = Math.round(y0 / ROW); r < y1 / ROW; r++) for (let b = a; b < z; b++) {
    const edge = b === a || b === z - 1;
    add(b, r, rnd() < d && !(edge && rnd() > d - 0.15) ? 1.5 : 0.4 + rnd() * 0.5);
  }
});
// Wide static crashes
[[156,0,480,.32],[156,640,1483,.3],[160,0,480,.25],[406,0,90,.4],[42,300,520,.2]].forEach(([y, a, z, v]) => {
  for (let b = Math.floor(a / BIN); b < z / BIN; b++) if (rnd() < 0.5) add(b, y / ROW, v * (0.5 + rnd() * 0.8));
});

const stops = [[0,0,0,0],[.1,0,0,40],[.22,0,0,110],[.36,0,70,170],[.5,0,150,150],[.6,50,190,80],[.7,220,230,30],[.8,250,150,0],[.9,220,50,10],[1,255,255,255]];
const colour = v => {
  if (v >= 1) return [255, 255, 255];
  let i = 1; while (v > stops[i][0]) i++;
  const a = stops[i - 1], b = stops[i], t = (v - a[0]) / (b[0] - a[0]);
  return [1, 2, 3].map(k => a[k] + (b[k] - a[k]) * t);
};
const ctx = canvas.getContext("2d");
const image = ctx.createImageData(W, H);
for (let y = 0; y < H; y++) {
  const base = Math.floor(y / ROW) * bins;
  for (let x = 0; x < W; x++) {
    const f = x / BIN, b = Math.floor(f), t = f - b;
    const c = colour(level[base + b] * (1 - t) + level[base + b + 1] * t);
    const o = (y * W + x) * 4;
    image.data[o] = c[0]; image.data[o + 1] = c[1]; image.data[o + 2] = c[2]; image.data[o + 3] = 255;
  }
}
ctx.putImageData(image, 0, 0);
```
